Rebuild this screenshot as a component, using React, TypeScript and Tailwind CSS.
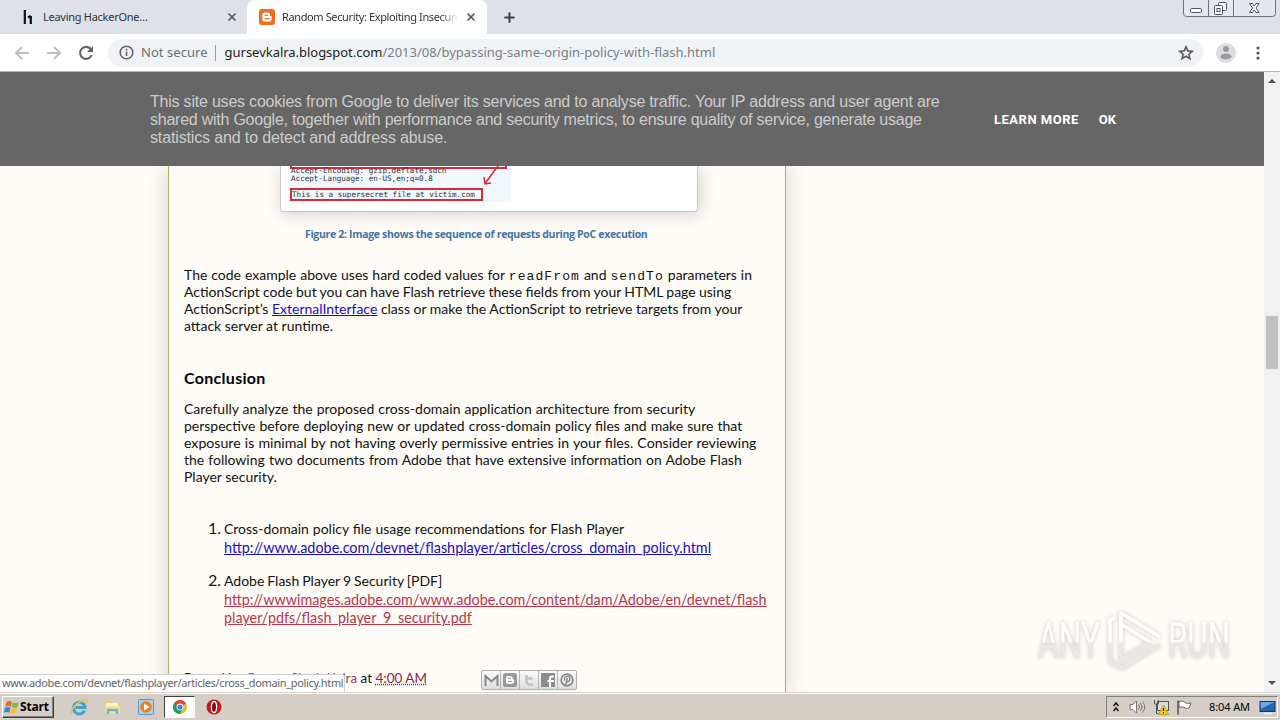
import { ReactNode } from 'react';
import { Plus, X } from 'lucide-react';

interface LineProps {
  children: ReactNode;
  className?: string;
}

// one line of body text, never wraps
function Line({ children, className = '' }: LineProps) {
  return (
    <div className="flex">
      <span className={'whitespace-pre ' + className}>{children}</span>
    </div>
  );
}

function BloggerMark({ className, fill }: { className: string; fill: string }) {
  return (
    <svg className={className} viewBox="0 0 16 16">
      <rect width="16" height="16" rx="3" fill={fill} />
      <path
        d="M6 3.5h2.7a2.4 2.4 0 0 1 2.4 2.4c0 .9.3 1.1 1 1.1.4 0 .7.3.7.7v2a2.8 2.8 0 0 1-2.8 2.8H6a2.7 2.7 0 0 1-2.7-2.8V6.2A2.7 2.7 0 0 1 6 3.5z"
        fill="#fff"
      />
      <path d="M6.1 6.3h2.3M6.1 9.7h3.900" stroke={fill} strokeWidth="1.3" strokeLinecap="round" />
    </svg>
  );
}

function TabStrip() {
  return (
    <div className="relative flex h-[34px] shrink-0 bg-[#dee1e8] text-[#303336]">
      <div className="flex w-[247px] items-center pl-[22px]">
        <svg className="h-4 w-[11px] shrink-0" viewBox="0 0 11 16">
          <path d="M2.8 1v14M8.8 7v8M6 8.5L8.8 7" stroke="#111" strokeWidth="2.2" fill="none" />
        </svg>
        <span className="ml-[10px] whitespace-pre text-[11px] leading-4 tracking-[-0.27px]">Leaving HackerOne…</span>
        <X className="ml-auto mr-[9px] size-3 text-[#55595f]" strokeWidth={3.5} />
      </div>
      <div className="flex w-[240px] items-center rounded-t-lg bg-white pl-3">
        <BloggerMark className="size-4 shrink-0" fill="#f46c1c" />
        <span className="ml-[7px] w-[176px] overflow-hidden whitespace-pre text-[11px] leading-4 tracking-[-0.38px] [mask-image:linear-gradient(to_right,#000_90%,transparent)]">
          Random Security: Exploiting Insecure
        </span>
        <X className="ml-auto mr-[10px] size-3 text-[#55595f]" strokeWidth={3.5} />
      </div>
      <div className="flex items-center pl-[15px]">
        <Plus className="size-[15px] text-[#3c4043]" strokeWidth={3.2} />
      </div>
      <svg className="absolute right-[4px] top-0 h-[17px] w-[93px]" viewBox="0 0 93 17" fill="none" stroke="#6c7278">
        <path d="M.5 0v13.5a3 3 0 0 0 3 3h86a3 3 0 0 0 3-3V0" fill="#e4e7ed" />
        <path d="M25.5 0v16M50.5 0v16" />
        <rect x="7.5" y="8.5" width="11" height="4" rx="1" fill="#fff" stroke="#4d5258" />
        <g stroke="#4d5258" fill="#fff">
          <rect x="35.5" y="2.5" width="8" height="8" rx="1" />
          <rect x="31.5" y="5.5" width="8" height="9" rx="1" />
          <rect x="34" y="8.5" width="3" height="3" />
          <path d="M66.500 3.500h3l1.800 2.500L73 3.500h3l-3 4.500 3 4.500h-3L71.300 10l-1.800 2.500h-3l3-4.500z" />
        </g>
      </svg>
    </div>
  );
}

function Toolbar() {
  return (
    <div className="flex h-[38px] shrink-0 items-center border-b border-[#b4b9ba] bg-white">
      <svg className="h-5 w-[108px] shrink-0" viewBox="0 0 108 20" fill="none" strokeWidth="1.9">
        <path d="M29 10H16M22 4l-6 6 6 6M47 10h13M54 4l6 6-6 6" stroke="#bcbec0" />
        <path d="M90.5 5.8A6 6 0 1 0 91.7 12" stroke="#5f6368" strokeWidth="2.1" />
        <path d="M93 3v6h-6z" fill="#5f6368" />
      </svg>
      <div className="flex h-[28px] w-[1095px] items-center rounded-full bg-[#f0f3f5] pl-[11px] text-[13px]">
        <svg className="size-[15px]" viewBox="0 0 15 15" fill="none" stroke="#5f6368" strokeWidth="1.6">
          <circle cx="7.5" cy="7.5" r="6.3" />
          <path d="M7.5 6.5v4.5M7.5 3.8v1.6" />
        </svg>
        <span className="ml-[7px] whitespace-pre text-[#6b6f74] tracking-[0.05px]">Not secure</span>
        <span className="ml-[7px] h-4 w-px bg-[#9a9fa3]" />
        <span className="ml-[9px] whitespace-pre text-[#202124] tracking-[-0.03px]">gursevkalra.blogspot.com</span>
        <span className="whitespace-pre text-[#7b8085] tracking-[-0.01px]">/2013/08/bypassing-same-origin-policy-with-flash.html</span>
        <svg className="ml-auto mr-[9px] size-4" viewBox="0 0 16 16" fill="none" stroke="#55595e" strokeWidth="1.6">
          <path d="M8 1.8l1.8 4.1 4.5.4-3.4 2.9 1 4.4L8 11.3l-3.9 2.3 1-4.4-3.4-2.9 4.5-.4z" />
        </svg>
      </div>
      <svg className="ml-[13px] size-5" viewBox="0 0 20 20">
        <circle cx="10" cy="10" r="10" fill="#dcdee0" />
        <circle cx="10" cy="6" r="3" fill="#989b9f" />
        <ellipse cx="10" cy="13.5" rx="5.5" ry="3" fill="#989b9f" />
      </svg>
      <svg className="ml-[20px] h-4 w-1" viewBox="0 0 4 16" fill="#4f5358">
        <circle cx="2" cy="3" r="1.6" />
        <circle cx="2" cy="8" r="1.6" />
        <circle cx="2" cy="13" r="1.6" />
      </svg>
    </div>
  );
}

function CookieBanner() {
  return (
    <div className="relative z-10 flex h-[94px] items-center bg-[#666] pl-[150px] pt-[2px] font-['Liberation_Sans',sans-serif]">
      <div className="w-[844px] text-[16px] leading-[18px] text-[#ccc]">
        <Line className="tracking-[-0.21px]">This site uses cookies from Google to deliver its services and to analyse traffic. Your IP address and user agent are</Line>
        <Line className="tracking-[-0.24px]">shared with Google, together with performance and security metrics, to ensure quality of service, generate usage</Line>
        <Line className="tracking-[-0.14px]">statistics and to detect and address abuse.</Line>
      </div>
      <div className="flex gap-5 whitespace-pre font-[Roboto,sans-serif] text-[13px] font-bold text-white">
        <span className="tracking-[0.5px]">LEARN MORE</span>
        <span>OK</span>
      </div>
    </div>
  );
}

function Figure() {
  return (
    <div className="ml-[111px] h-[46px] w-[418px] rounded-b border border-t-0 border-[#c9c9c9] bg-white pl-[9px] shadow-[2px_2px_16px_rgba(0,0,0,0.18)]">
      <div className="relative h-9 w-[221px] overflow-hidden bg-[#f0f7fd] font-['DejaVu_Sans_Mono',monospace] text-[7.6px] leading-[8px] text-[#333]">
        <div className="h-[3px] w-[217px] border-2 border-t-0 border-[#dc2735]" />
        <div className="-mt-[2px] whitespace-pre pl-[1px]">Accept-Encoding: gzip,deflate,sdch</div>
        <div className="whitespace-pre pl-[1px]">Accept-Language: en-US,en;q=0.8</div>
        <div className="mt-[5px] h-[13px] w-[193px] whitespace-pre border-2 border-[#dc2735] leading-[9px]">This is a supersecret file at victim.com</div>
        <svg className="absolute left-[192px] top-0 h-5 w-5" viewBox="0 0 20 20" fill="none" stroke="#dc2735" strokeWidth="1.5">
          <path d="M16 0L3 17.5M2 11l1 7 6-1" />
        </svg>
      </div>
    </div>
  );
}

function ShareButtons() {
  return (
    <div className="mt-px flex h-5 w-24 divide-x divide-[#b5b5b5] rounded-[2px] border border-[#b0b0b0] bg-gradient-to-b from-[#fbfbfb] to-[#dedede] [&>span]:flex [&>span]:flex-1 [&>span]:items-center [&>span]:justify-center">
      <span>
        <svg className="h-3 w-[15px]" viewBox="0 0 15 12" fill="none" stroke="#888" strokeWidth="2">
          <path d="M1.5 12V2l6 5.5 6-5.5v10" />
        </svg>
      </span>
      <span><BloggerMark className="size-[14px]" fill="#999" /></span>
      <span>
        <svg className="size-3" viewBox="0 0 12 12" fill="none" stroke="#c2c2c2" strokeWidth="2.4">
          <path d="M3.5 1v6.5a3 3 0 0 0 3 3H10M3.5 4.5H9.5" />
        </svg>
      </span>
      <span>
        <svg className="size-[14px]" viewBox="0 0 14 14">
          <rect width="14" height="14" fill="#8b8b8b" />
          <path d="M9 14V5.500a2 2 0 0 1 2-2h2M6.500 8H13" stroke="#fff" strokeWidth="2" fill="none" />
        </svg>
      </span>
      <span>
        <svg className="size-[14px]" viewBox="0 0 14 14" fill="none" stroke="#888" strokeWidth="1.7">
          <circle cx="7" cy="7" r="5.8" />
          <path d="M5.5 12.5L7.4 5M4.8 7.5c-1-3.5 1-4.2 2.5-4.2 2 0 3 1.3 2.5 3.2S7.500 9.200 6.500 8.500" strokeWidth="1.4" />
        </svg>
      </span>
    </div>
  );
}

function Code({ children }: { children: ReactNode }) {
  return <code className="font-['Liberation_Mono',monospace] text-[13px] leading-none tracking-[1.1px]">{children}</code>;
}

function Article() {
  return (
    <div className="ml-[168px] h-[526px] w-[618px] border-x border-[#abb05a] bg-[#fffcf8] font-[Lato,sans-serif] text-[14px] text-[#111] shadow-[0_0_20px_rgba(0,0,0,0.17)]">
      <Figure />
      <div className="mt-[14px] flex h-4 pl-[136px] font-['Open_Sans',sans-serif] text-[10.5px] font-bold leading-4 text-[#4273a8]">
        <span className="whitespace-pre tracking-[-0.32px]">Figure 2: Image shows the sequence of requests during PoC execution</span>
      </div>
      <div className="pl-[15px]">
        <div className="mt-[24px] leading-[17px]">
          <Line className="[word-spacing:0.35px]">
            The code example above uses hard coded values for <Code>readFrom</Code> and <Code>sendTo</Code> parameters in
          </Line>
          <Line className="[word-spacing:-0.3px]">ActionScript code but you can have Flash retrieve these fields from your HTML page using</Line>
          <Line>
            ActionScript’s <a className="text-[#1a0dc8] underline">ExternalInterface</a> class or make the ActionScript to retrieve targets from your
          </Line>
          <Line>attack server at runtime.</Line>
        </div>
        <h2 className="mt-[35px] flex h-[18px] text-[16px] font-bold leading-[18px] tracking-[0.3px] text-black">
          <span>Conclusion</span>
        </h2>
        <div className="mt-[13px] leading-[17px]">
          <Line className="[word-spacing:0.4px]">Carefully analyze the proposed cross-domain application architecture from security</Line>
          <Line className="[word-spacing:0.5px]">perspective before deploying new or updated cross-domain policy files and make sure that</Line>
          <Line className="text-[14.15px] [word-spacing:0.5px]">exposure is minimal by not having overly permissive entries in your files. Consider reviewing</Line>
          <Line className="[word-spacing:0.5px]">the following two documents from Adobe that have extensive information on Adobe Flash</Line>
          <Line>Player security.</Line>
        </div>
        <ol className="mt-[34px] leading-[19px]">
          <li className="flex">
            <span className="w-10 pr-[3px] text-right text-[15.5px]">1.</span>
            <div>
              <Line className="[word-spacing:0.4px]">Cross-domain policy file usage recommendations for Flash Player</Line>
              <Line className="text-[14.4px] text-[#1a0dc8] underline">http://www.adobe.com/devnet/flashplayer/articles/cross_domain_policy.html</Line>
            </div>
          </li>
          <li className="mt-[14px] flex">
            <span className="w-10 pr-[3px] text-right text-[15.5px]">2.</span>
            <div>
              <Line className="[word-spacing:-0.6px]">Adobe Flash Player 9 Security [PDF]</Line>
              <div className="mt-px leading-[18px] text-[14.37px] text-[#b8374c] underline">
                <Line>http://wwwimages.adobe.com/www.adobe.com/content/dam/Adobe/en/devnet/flash</Line>
                <Line>player/pdfs/flash_player_9_security.pdf</Line>
              </div>
            </div>
          </li>
        </ol>
        <div className="mt-[42px] flex h-5 leading-[18px]">
          <span className="w-[297px] whitespace-pre text-[13.5px]">
            Posted by <a className="text-[#b8374c]">Gursev Singh Kalra</a> at <a className="text-[#8f2638] underline decoration-dotted">4:00 AM</a>
          </span>
          <ShareButtons />
        </div>
      </div>
    </div>
  );
}

function Watermark() {
  return (
    <svg className="absolute right-[42px] top-[536px] h-[68px] w-[204px] drop-shadow-[0_0_2px_rgba(0,0,0,0.22)]" viewBox="0 0 204 68">
      <defs>
        <linearGradient id="wm" x1="0" y1="0" x2="0" y2="68" gradientUnits="userSpaceOnUse">
          <stop offset="0.5" stopColor="#fff" />
          <stop offset="0.51" stopColor="#e9e8e5" />
        </linearGradient>
      </defs>
      <g fill="url(#wm)" fontFamily="Roboto, sans-serif" fontWeight="400" fontSize="50">
        <text x="4" y="50" textLength="62" lengthAdjust="spacingAndGlyphs">ANY</text>
        <text x="134" y="50" textLength="62" lengthAdjust="spacingAndGlyphs">RUN</text>
      </g>
      <g fill="none" stroke="url(#wm)" strokeWidth="3.5" strokeLinejoin="round">
        <path d="M87 48V5l39 24M87 16l29 18-29 18zM126 37L88 60l-6-4" />
        <path d="M81 10l-5 2v42l6 4" />
      </g>
    </svg>
  );
}

function Scrollbar() {
  return (
    <div className="flex w-4 shrink-0 flex-col items-center justify-between bg-[#f1f1f1] py-[7px]">
      <div className="border-x-4 border-b-4 border-x-transparent border-b-[#505050]" />
      <div className="mb-[80px] h-[53px] w-3 bg-[#c1c1c1]" />
      <div className="border-x-4 border-t-4 border-x-transparent border-t-[#505050]" />
    </div>
  );
}

function TaskIcons() {
  return (
    <div className="flex items-center">
      <svg className="ml-[16px] size-[18px]" viewBox="0 0 18 18" fill="none">
        <path d="M14.5 12.5A5.8 5.8 0 1 1 15 9.5H5.5" stroke="#3fa4dc" strokeWidth="3" />
        <path d="M2 16C-1 12 10 1 16 2c1.5.5 1 3-.5 4.5" stroke="#efc13b" strokeWidth="1.5" />
      </svg>
      <svg className="ml-[16px] h-4 w-[17px]" viewBox="0 0 17 16">
        <path d="M1 2h5l1.5 2H16v10H1z" fill="#efc95b" />
        <path d="M2 4h12v4H2z" fill="#fff7cf" />
        <path d="M1 7h15v8H1z" fill="#f8df88" />
        <path d="M4 15v-4h9v4" stroke="#66b4df" strokeWidth="2.5" fill="none" />
      </svg>
      <svg className="ml-[17px] size-4" viewBox="0 0 16 16">
        <rect x=".5" y=".5" width="15" height="15" rx="1" fill="#a9d3ed" stroke="#5a96c7" />
        <circle cx="8" cy="8" r="5.8" fill="#ef7e13" />
        <path d="M6 4.5L11.5 8 6 11.500z" fill="#fff" />
      </svg>
      <div className="ml-[10px] flex h-[22px] w-[31px] items-center justify-center border border-b-white border-l-[#404040] border-r-white border-t-[#404040] bg-white">
        <svg className="size-[14px]" viewBox="0 0 16 16">
          <circle cx="8" cy="8" r="8" fill="#e8bf25" />
          <path d="M8 8L1.07 4A8 8 0 0 1 14.93 4z" fill="#db4437" />
          <path d="M8 8L1.07 4A8 8 0 0 0 8 16l3.5-6z" fill="#279b56" />
          <circle cx="8" cy="8" r="3.9" fill="#fff" />
          <circle cx="8" cy="8" r="3" fill="#4285f4" />
        </svg>
      </div>
      <svg className="ml-[11px] size-4" viewBox="0 0 16 16">
        <circle cx="8" cy="8" r="7.5" fill="#c9151e" />
        <ellipse cx="8" cy="8" rx="2.6" ry="5.5" fill="#7a0a10" stroke="#fff" strokeWidth="1.3" />
      </svg>
    </div>
  );
}

function Taskbar() {
  return (
    <div className="flex h-7 shrink-0 items-center border-t border-[#d4d0c8] bg-[#d4cec6] shadow-[inset_0_1px_0_#fff] text-black">
      <div className="ml-[2px] mt-px flex h-[22px] w-[52px] items-center border border-b-[#404040] border-l-white border-r-[#404040] border-t-white pl-px shadow-[inset_-1px_-1px_0_#808080]">
        <svg className="h-[15px] w-4 shrink-0" viewBox="0 0 16 15">
          <path d="M2.5 2q3-2 5.5 0L6.8 6.8q-2.5-1.8-5.5 0z" fill="#e66a35" />
          <path d="M8.8 2.3q3 1.6 6-.2l-1.3 5q-3 1.6-5.9-.1z" fill="#83b843" />
          <path d="M1 7.8q3-1.8 5.5 0l-1.3 5q-2.5-1.8-5.2 0z" fill="#3d84c8" />
          <path d="M7.300 8q3 1.600 6-.2l-1.300 5q-3 1.600-5.900-.1z" fill="#f2c331" />
        </svg>
        <span className="whitespace-pre font-['Open_Sans',sans-serif] text-[12px] font-bold tracking-[-0.2px]">Start</span>
      </div>
      <TaskIcons />
      <div className="ml-auto mr-[2px] mt-px flex h-[22px] w-[172px] items-center border border-b-white border-l-[#808080] border-r-white border-t-[#808080]">
        <svg className="ml-[6px] h-3 w-[6px]" viewBox="0 0 6 12" fill="none" stroke="#111" strokeWidth="1.5">
          <path d="M.5 5L3 2l2.5 3M.5 10L3 7l2.5 3" />
        </svg>
        <svg className="ml-[10px] h-4 w-[17px]" viewBox="0 0 17 16" fill="none" stroke="#77797b">
          <path d="M1 5.5h3L7.5 2v12L4 10.5H1z" fill="#fff" />
          <path d="M9.5 5.5q2 2.5 0 5M11.5 4q3 4 0 8M13.5 2.5q4.500 5.500 0 11" />
        </svg>
        <svg className="ml-[7px] size-4" viewBox="0 0 16 16">
          <rect x="4.5" y="2.5" width="11" height="9" fill="#d9dcdc" stroke="#555" />
          <path d="M1.5 1v4h4V1M3.5 5v9.5H8" stroke="#555" fill="none" />
          <path d="M10.5 6l5 9.5h-10z" fill="#f2cf1d" stroke="#a98d12" strokeWidth=".7" />
          <path d="M10.5 9v3M10.5 13v1.2" stroke="#222" strokeWidth="1.2" />
        </svg>
        <svg className="ml-[7px] h-4 w-[17px]" viewBox="0 0 17 16" fill="#fff" stroke="#666">
          <path d="M2 1.5v14" strokeWidth="1.8" />
          <path d="M3 2.5c3-1 5 0 6 1 1.5 1 3 1 6 .5l-2 5c-2 .5-3.5.5-5-.5-1-.8-3-.8-5 0z" />
        </svg>
        <span className="ml-[16px] whitespace-pre text-[11px] tracking-[-0.1px]">8:04 AM</span>
        <svg className="ml-auto mr-px h-[15px] w-[17px]" viewBox="0 0 17 15">
          <rect x="1" y="1.5" width="15" height="10" fill="#2463b5" stroke="#1d3658" />
          <path d="M1.5 2h14L2 9z" fill="#6ca8e5" />
          <path d="M5 13.5h8" stroke="#eee" strokeWidth="2" />
        </svg>
      </div>
    </div>
  );
}

export default function App() {
  return (
    <div className="flex h-[720px] w-[1280px] flex-col overflow-hidden bg-[#fffcf8] font-['Noto_Sans',sans-serif]">
      <TabStrip />
      <Toolbar />
      <div className="relative flex h-[620px] shrink-0 overflow-hidden">
        <div className="min-w-0 flex-1">
          <CookieBanner />
          <Article />
        </div>
        <Scrollbar />
        <Watermark />
        {/* link target shown on hover */}
        <div className="absolute bottom-0 left-0 h-[18px] w-[345px] whitespace-pre rounded-tr border-r border-t border-[#d0d0d0] bg-white pl-[2px] text-[11px] leading-[16px] text-[#5f6368]">
          <span className="tracking-[-0.35px]">www.adobe.com/devnet/flashplayer/articles/cross_domain_policy.html</span>
        </div>
      </div>
      <Taskbar />
    </div>
  );
}
